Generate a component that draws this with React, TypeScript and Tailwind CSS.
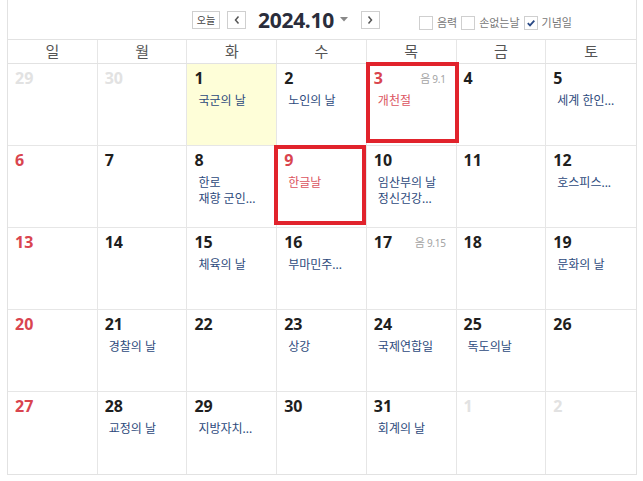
import React from "react";

type Day = {
  n: number;
  out?: boolean;
  red?: boolean;
  today?: boolean;
  lunar?: string;
  events?: string[];
  holiday?: boolean;
  box?: "a" | "b";
};

const weeks: Day[][] = [
  [
    { n: 29, out: true },
    { n: 30, out: true },
    { n: 1, today: true, events: ["국군의 날"] },
    { n: 2, events: ["노인의 날"] },
    { n: 3, red: true, holiday: true, lunar: "9.1", events: ["개천절"], box: "a" },
    { n: 4 },
    { n: 5, events: ["세계 한인..."] },
  ],
  [
    { n: 6, red: true },
    { n: 7 },
    { n: 8, events: ["한로", "재향 군인..."] },
    { n: 9, red: true, holiday: true, events: ["한글날"], box: "b" },
    { n: 10, events: ["임산부의 날", "정신건강..."] },
    { n: 11 },
    { n: 12, events: ["호스피스..."] },
  ],
  [
    { n: 13, red: true },
    { n: 14 },
    { n: 15, events: ["체육의 날"] },
    { n: 16, events: ["부마민주..."] },
    { n: 17, lunar: "9.15" },
    { n: 18 },
    { n: 19, events: ["문화의 날"] },
  ],
  [
    { n: 20, red: true },
    { n: 21, events: ["경찰의 날"] },
    { n: 22 },
    { n: 23, events: ["상강"] },
    { n: 24, events: ["국제연합일"] },
    { n: 25, events: ["독도의날"] },
    { n: 26 },
  ],
  [
    { n: 27, red: true },
    { n: 28, events: ["교정의 날"] },
    { n: 29, events: ["지방자치..."] },
    { n: 30 },
    { n: 31, events: ["회계의 날"] },
    { n: 1, out: true },
    { n: 2, out: true },
  ],
];

const dayNames = ["일", "월", "화", "수", "목", "금", "토"];

function Checkbox({ checked, label }: { checked?: boolean; label: string }) {
  return (
    <div className="flex items-center">
      <div className="w-[14px] h-[14px] border border-[#cfcfcf] bg-white flex items-center justify-center">
        {checked && (
          <svg width="10" height="10" viewBox="0 0 10 10">
            <path d="M1.8 5.2 L4 7.4 L8.3 2.6" fill="none" stroke="#2a4a86" strokeWidth="1.8" />
          </svg>
        )}
      </div>
      <span className="ml-[4px] text-[11px] leading-[14px] text-[#777]">{label}</span>
    </div>
  );
}

function Cell({ d, last }: { d: Day; last: boolean }) {
  const numColor = d.out
    ? "text-[#e2e2e2]"
    : d.red
    ? "text-[#d9454f]"
    : "text-[#1f1f1f]";
  return (
    <div
      className={`relative h-full ${last ? "" : "border-r border-[#e6e6e6]"} ${
        d.today ? "bg-[#fefed8]" : ""
      }`}
    >
      <div className="flex items-start justify-between pl-[7px] pr-[10px] pt-[4px]">
        <span className={`text-[16px] leading-[20px] font-bold ${numColor}`}>{d.n}</span>
        {d.lunar && (
          <span className="mt-[5px] text-[#a3a3a3] text-[10px] leading-[12px] tracking-[-0.3px]">
            <span className="text-[11px]">음</span> {d.lunar}
          </span>
        )}
      </div>
      {d.events && (
        <div className="mt-[5px] pl-[11px]">
          {d.events.map((e, i) => (
            <div
              key={i}
              className={`text-[12px] leading-[16px] whitespace-nowrap ${
                d.holiday ? "text-[#db5561]" : "text-[#2d4a7c]"
              }`}
            >
              {e}
            </div>
          ))}
        </div>
      )}
      {d.box === "a" && (
        <div className="absolute left-[-1px] right-[-3px] top-[-2px] bottom-[2px] border-[4px] border-[#e1232c] z-10" />
      )}
      {d.box === "b" && (
        <div className="absolute left-[-3px] right-[0px] top-[-1px] bottom-[2px] border-[4px] border-[#e1232c] z-10" />
      )}
    </div>
  );
}

export default function App() {
  return (
    <div
      className="w-[643px] h-[481px] bg-white overflow-hidden"
      style={{ fontFamily: '"Noto Sans", "Noto Sans CJK KR", sans-serif' }}
    >
      <div className="ml-[7px] w-[630px] border-x border-b border-[#e2e2e2]">
        {/* toolbar */}
        <div className="h-[39px] flex items-start">
          <div className="ml-[184px] mt-[11px] w-[28px] h-[18px] border border-[#cfcfcf] flex items-center justify-center text-[10px] text-[#444] leading-none">
            오늘
          </div>
          <div className="ml-[7px] mt-[11px] w-[19px] h-[18px] border border-[#cfcfcf] flex items-center justify-center">
            <svg width="8" height="10" viewBox="0 0 8 10">
              <path d="M5.5 1.5 L2.5 5 L5.5 8.5" fill="none" stroke="#555" strokeWidth="1.5" />
            </svg>
          </div>
          <div className="ml-[12px] mt-[6px] text-[21px] leading-[28px] font-bold text-[#2a2d3b] tracking-[-0.3px]">
            2024.10
          </div>
          <svg className="ml-[6px] mt-[17px]" width="8" height="5" viewBox="0 0 8 5">
            <path d="M0 0 L8 0 L4 4.5 Z" fill="#888" />
          </svg>
          <div className="ml-[13px] mt-[11px] w-[19px] h-[18px] border border-[#cfcfcf] flex items-center justify-center">
            <svg width="8" height="10" viewBox="0 0 8 10">
              <path d="M2.5 1.5 L5.5 5 L2.5 8.5" fill="none" stroke="#555" strokeWidth="1.5" />
            </svg>
          </div>
          <div className="ml-[39px] mt-[16px] flex items-center gap-[4px]">
            <Checkbox label="음력" />
            <Checkbox label="손없는날" />
            <Checkbox checked label="기념일" />
          </div>
        </div>
        {/* header */}
        <div className="grid grid-cols-7 h-[25px] border-y border-[#e2e2e2]">
          {dayNames.map((n, i) => (
            <div
              key={n}
              className={`flex items-center justify-center text-[15px] text-[#555] ${
                i < 6 ? "border-r border-[#e6e6e6]" : ""
              }`}
            >
              {n}
            </div>
          ))}
        </div>
        {weeks.map((w, wi) => (
          <div
            key={wi}
            className={`grid grid-cols-7 h-[82px] ${wi < 4 ? "border-b border-[#e6e6e6]" : ""}`}
          >
            {w.map((d, di) => (
              <Cell key={di} d={d} last={di === 6} />
            ))}
          </div>
        ))}
      </div>
    </div>
  );
}
